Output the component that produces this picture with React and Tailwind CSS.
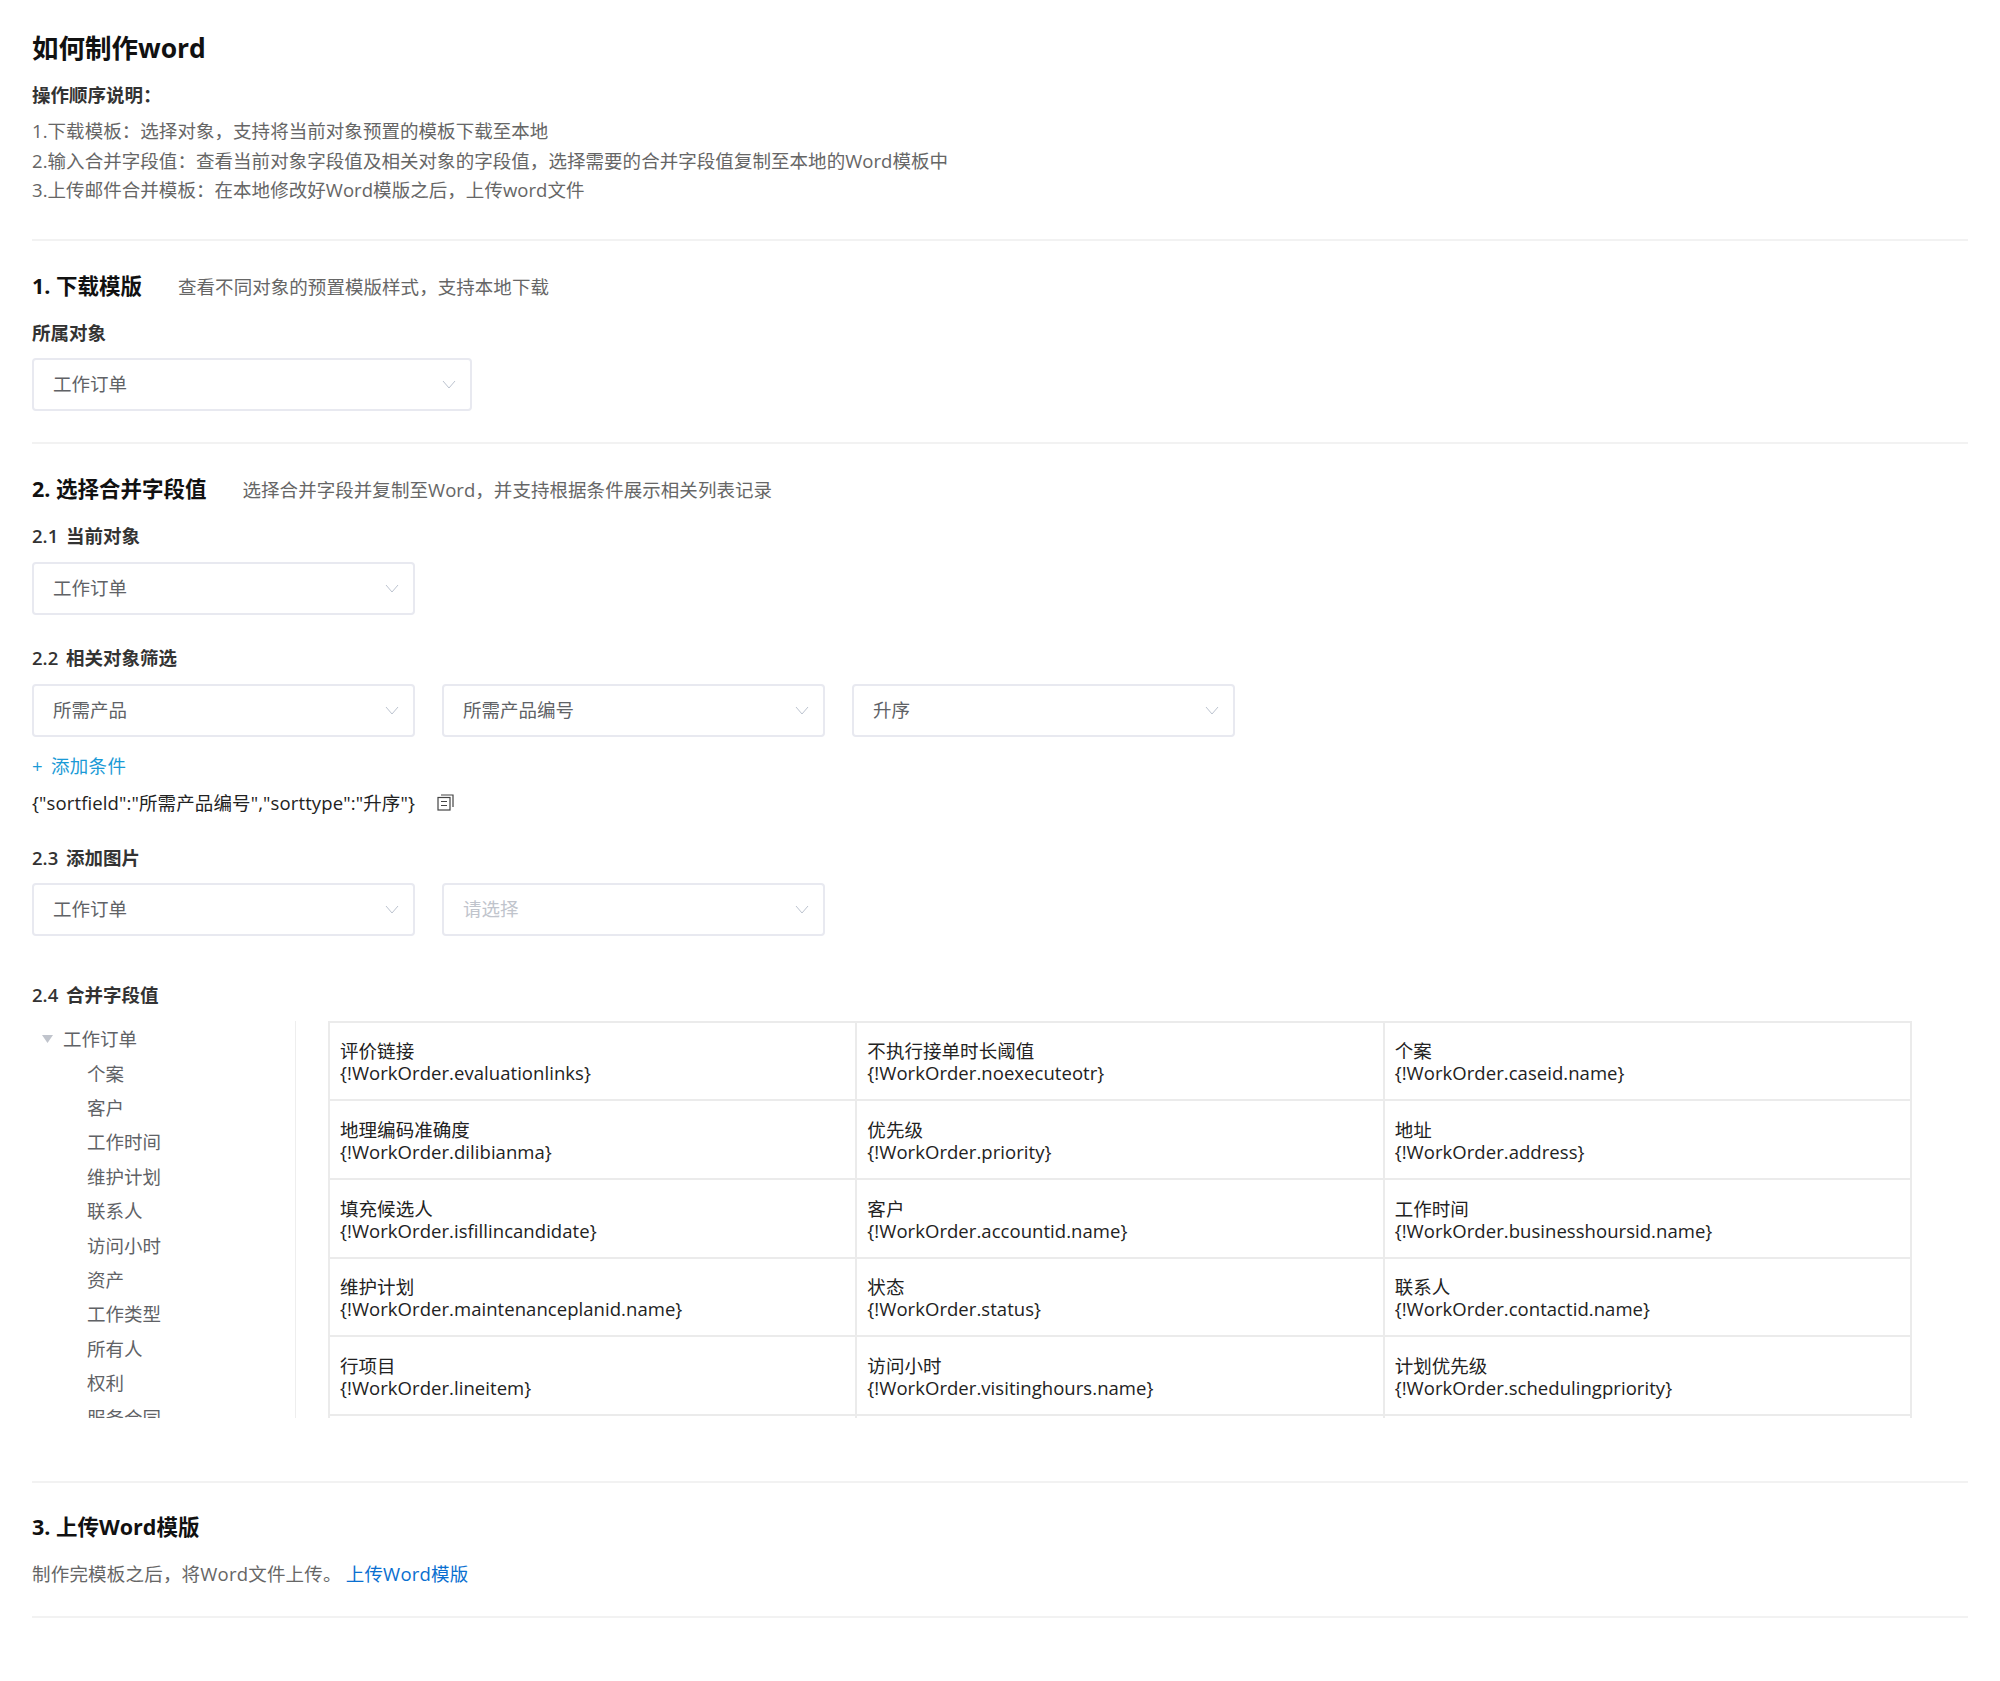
const guide = [
  "1.下载模板：选择对象，支持将当前对象预置的模板下载至本地",
  "2.输入合并字段值：查看当前对象字段值及相关对象的字段值，选择需要的合并字段值复制至本地的Word模板中",
  "3.上传邮件合并模板：在本地修改好Word模版之后，上传word文件",
];

const treeItems = ["个案", "客户", "工作时间", "维护计划", "联系人", "访问小时", "资产", "工作类型", "所有人", "权利", "服务合同"];

const fields = [
  ["评价链接", "{!WorkOrder.evaluationlinks}"],
  ["不执行接单时长阈值", "{!WorkOrder.noexecuteotr}"],
  ["个案", "{!WorkOrder.caseid.name}"],
  ["地理编码准确度", "{!WorkOrder.dilibianma}"],
  ["优先级", "{!WorkOrder.priority}"],
  ["地址", "{!WorkOrder.address}"],
  ["填充候选人", "{!WorkOrder.isfillincandidate}"],
  ["客户", "{!WorkOrder.accountid.name}"],
  ["工作时间", "{!WorkOrder.businesshoursid.name}"],
  ["维护计划", "{!WorkOrder.maintenanceplanid.name}"],
  ["状态", "{!WorkOrder.status}"],
  ["联系人", "{!WorkOrder.contactid.name}"],
  ["行项目", "{!WorkOrder.lineitem}"],
  ["访问小时", "{!WorkOrder.visitinghours.name}"],
  ["计划优先级", "{!WorkOrder.schedulingpriority}"],
  ["", ""],
  ["", ""],
  ["", ""],
];

function Select({ value, placeholder, wide }) {
  return (
    <div className={`flex h-[53px] items-center justify-between rounded border-2 border-[#e8e9f0] bg-white pl-[19px] pr-[14px] ${wide ? "w-[440px]" : "w-[383px]"}`}>
      <span className={`text-[18.5px] ${placeholder ? "text-[#c0c4cc]" : "text-[#606266]"}`}>{value}</span>
      <svg width="14" height="9" viewBox="0 0 14 9" fill="none" stroke="#bcc3cf" strokeWidth="1">
        <path d="M1 1l6 7 6-7" />
      </svg>
    </div>
  );
}

function Divider({ className }) {
  return <div className={`h-[2px] bg-[#f2f2f2] ${className}`} />;
}

function Heading({ children, note, className }) {
  return (
    <div className={`flex h-[30px] items-center ${className}`}>
      <h2 className="text-[21.5px] font-bold text-[#111]">{children}</h2>
      {note && <span className="ml-9 text-[18.5px] tracking-[0.05px] text-[#666]">{note}</span>}
    </div>
  );
}

function Label({ children, className }) {
  return <div className={`text-[18.5px] font-semibold leading-[28px] text-[#333] [word-spacing:3px] ${className}`}>{children}</div>;
}

export default function App() {
  return (
    <div className="min-h-[1681px] bg-white px-8 pt-[30px] font-['Open_Sans','Noto_Sans_CJK_SC',sans-serif]">
      <h1 className="text-[26.5px] font-bold leading-[36px] text-[#111]">如何制作word</h1>
      <div className="mt-[14px] text-[18.5px] font-semibold leading-[29px] text-[#333]">操作顺序说明：</div>
      <div className="mt-[7px] text-[18.5px] leading-[29.5px] tracking-[0.05px] text-[#666]">
        {guide.map((line) => (
          <div key={line}>{line}</div>
        ))}
      </div>
      <Divider className="mt-[34px]" />

      <Heading className="mt-[31px]" note="查看不同对象的预置模版样式，支持本地下载">1. 下载模版</Heading>
      <Label className="mt-[17px]">所属对象</Label>
      <div className="mt-[11px]">
        <Select value="工作订单" wide />
      </div>
      <Divider className="mt-[31px]" />

      <Heading className="mt-[31px]" note="选择合并字段并复制至Word，并支持根据条件展示相关列表记录">2. 选择合并字段值</Heading>
      <Label className="mt-[17px]">2.1 当前对象</Label>
      <div className="mt-[12px]">
        <Select value="工作订单" />
      </div>

      <Label className="mt-[29px]">2.2 相关对象筛选</Label>
      <div className="mt-[12px] flex gap-[27px]">
        <Select value="所需产品" />
        <Select value="所需产品编号" />
        <Select value="升序" />
      </div>
      <div className="mt-[15px] text-[18.5px] leading-[28px] tracking-[0.3px] text-[#1a9ad6] [word-spacing:3px]">+ 添加条件</div>
      <div className="mt-[9px] flex items-center text-[18.5px] leading-[28px] tracking-[0.12px] text-[#222]">
        <span>{'{"sortfield":"所需产品编号","sorttype":"升序"}'}</span>
        <svg className="ml-[22px]" width="17" height="17" viewBox="0 0 17 17" fill="none" stroke="#444" strokeWidth="1.2">
          <rect x="1" y="3.5" width="12" height="12.5" />
          <path d="M4 1h12v12M4 7.5h6M4 11.5h6" />
        </svg>
      </div>

      <Label className="mt-[27px]">2.3 添加图片</Label>
      <div className="mt-[11px] flex gap-[27px]">
        <Select value="工作订单" />
        <Select value="请选择" placeholder />
      </div>

      <Label className="mt-[45px]">2.4 合并字段值</Label>
      <div className="mt-[12px] flex h-[397px] overflow-hidden">
        <div className="w-[264px] border-r border-[#eeeeee] pt-[1px] text-[18.5px] leading-[34.4px] text-[#606266]">
          <div className="flex h-[35px] items-center pl-[10px]">
            <svg width="11" height="8" viewBox="0 0 11 8" fill="#c0c4cc">
              <path d="M0 0h11L5.5 8z" />
            </svg>
            <span className="ml-[10px]">工作订单</span>
          </div>
          {treeItems.map((item) => (
            <div key={item} className="pl-[55px]">{item}</div>
          ))}
        </div>
        <div className="ml-[32px] grid h-fit w-[1584px] grid-cols-3 border-l-2 border-t-2 border-[#ebebeb]">
          {fields.map(([name, code], i) => (
            <div key={i} className="flex h-[78.7px] flex-col justify-center border-b-2 border-r-2 border-[#ebebeb] px-[10px] pt-[3px] text-[18.5px] leading-[22px] tracking-[0.05px] text-[#222]">
              <span>{name}</span>
              <span>{code}</span>
            </div>
          ))}
        </div>
      </div>
      <Divider className="mt-[63px]" />

      <Heading className="mt-[30px]">3. 上传Word模版</Heading>
      <div className="mt-[17px] text-[18.5px] leading-[28px] tracking-[0.2px] text-[#666]">
        制作完模板之后，将Word文件上传。
        <span className="ml-[4px] text-[#0a6fd0]">上传Word模版</span>
      </div>
      <Divider className="mt-[28px]" />
    </div>
  );
}
